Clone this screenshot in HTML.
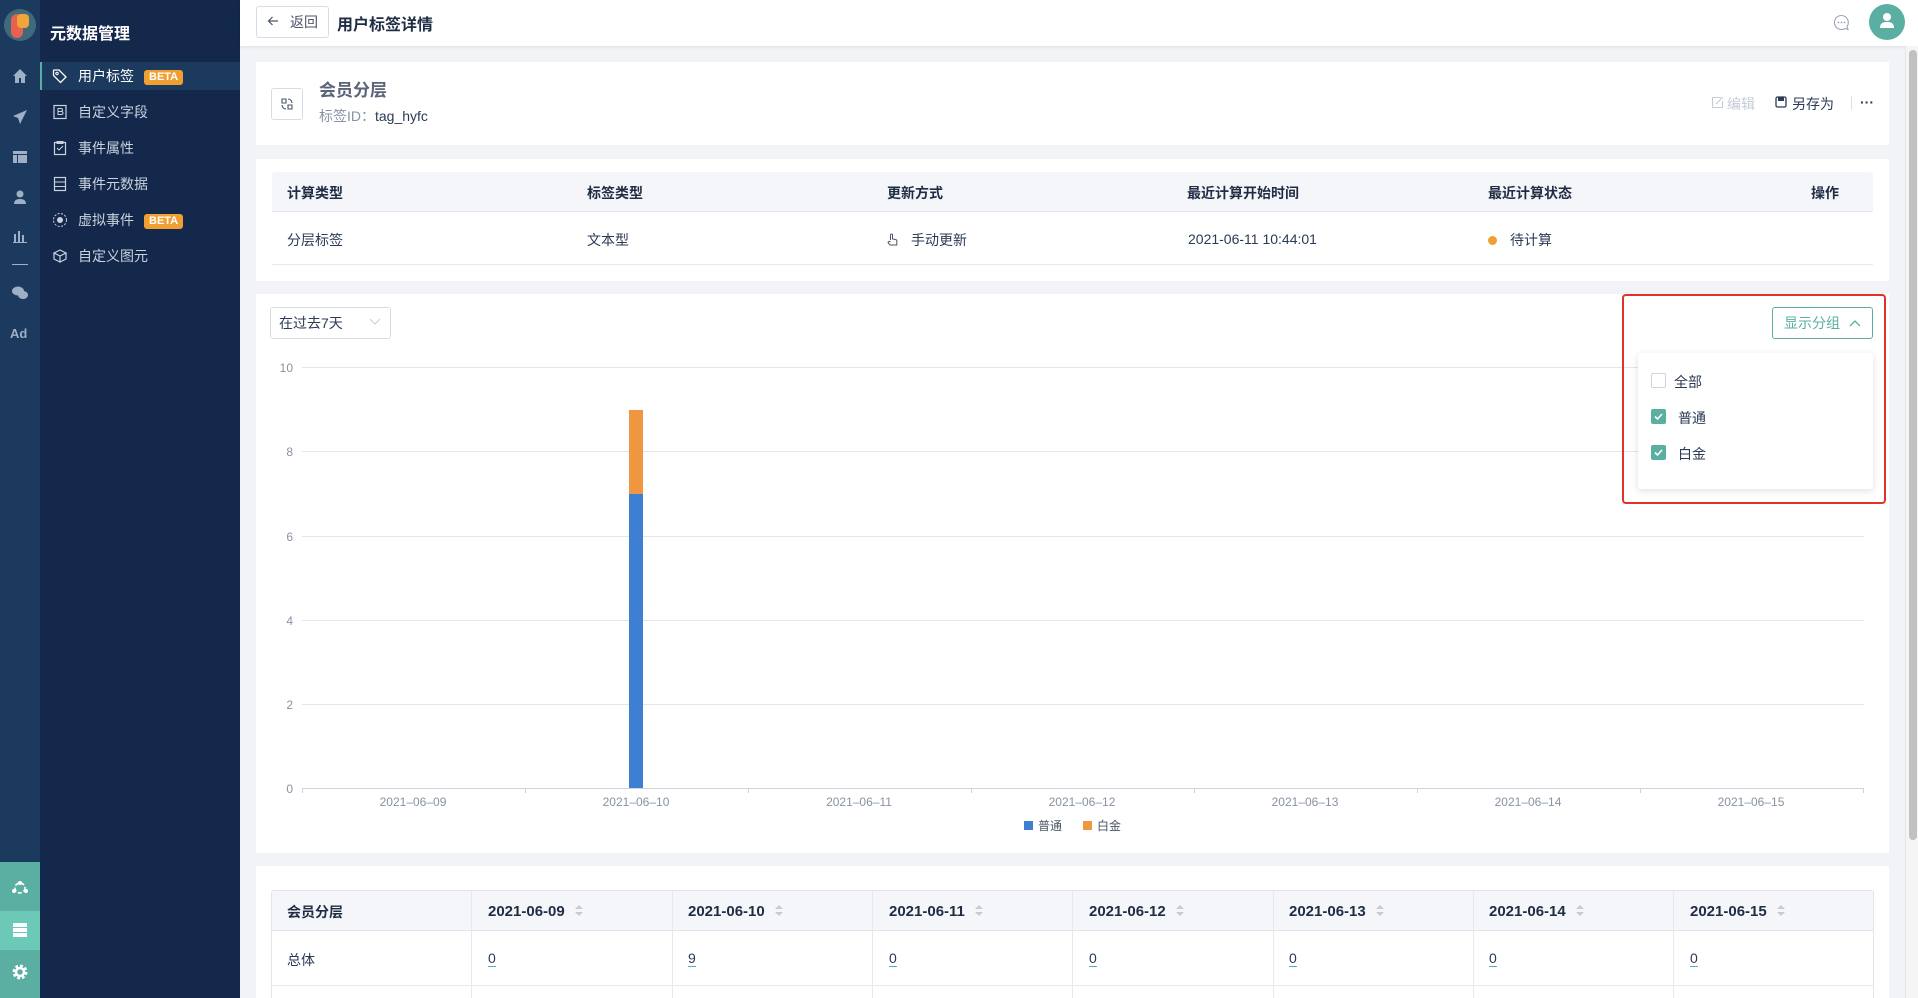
<!DOCTYPE html>
<html><head><meta charset="utf-8"><style>
*{box-sizing:border-box;margin:0;padding:0}
body{width:1918px;height:998px;overflow:hidden;background:#f2f3f7;font-family:"Liberation Sans","Noto Sans CJK SC",sans-serif;color:#2b3a55;font-size:14px;position:relative}
.a{position:absolute}
.rail{left:0;top:0;width:40px;height:998px;background:#1c3a5e}
.side{left:40px;top:0;width:200px;height:998px;background:#13284a}
.mi{position:absolute;left:0;width:200px;height:36px;color:#c9d2de;font-size:14px;line-height:36px;padding-left:38px}
.mi svg{position:absolute;left:12px;top:10px}
.beta{display:inline-block;background:#f0a032;color:#fff;font-size:11px;line-height:15px;padding:0 5px;border-radius:3px;margin-left:10px;font-weight:bold;vertical-align:1px}
.card{background:#fff}
.th{background:#f4f6f9;font-weight:bold;color:#1f2d44}
.srt{display:inline-block;width:8px;height:12px;margin-left:10px;vertical-align:-1px;position:relative}
.srt:before{content:"";position:absolute;left:0;top:0;border:4px solid transparent;border-bottom:4px solid #c5ccd6;border-top:0}
.srt:after{content:"";position:absolute;left:0;top:7px;border:4px solid transparent;border-top:4px solid #c5ccd6;border-bottom:0}
</style></head><body>
<div class="a rail"></div>
<div class="a" style="left:4px;top:9px;width:32px;height:32px;border-radius:50%;background:#3f6a7c"></div>
<div class="a" style="left:11px;top:14px;width:12px;height:24px;border-radius:6px;background:#e8604e"></div>
<div class="a" style="left:17px;top:14px;width:12px;height:14px;border-radius:4px;background:#f2a33a"></div>
<svg class="a" style="left:12px;top:68px" width="16" height="16" viewBox="0 0 16 16"><path d="M8 1L1 8h2v7h4v-5h2v5h4V8h2z" fill="#9fb0c6"/></svg>
<svg class="a" style="left:12px;top:109px" width="16" height="16" viewBox="0 0 16 16"><path d="M15 1L1 7l5 2 2 6z" fill="#9fb0c6"/></svg>
<svg class="a" style="left:12px;top:149px" width="16" height="16" viewBox="0 0 16 16"><path d="M1 2h14v3H1zM1 6h4v8H1zM6 6h9v8H6z" fill="#9fb0c6"/></svg>
<svg class="a" style="left:12px;top:189px" width="16" height="16" viewBox="0 0 16 16"><circle cx="8" cy="5" r="3.5" fill="#9fb0c6"/><path d="M2 15c0-4 3-5 6-5s6 1 6 5z" fill="#9fb0c6"/></svg>
<svg class="a" style="left:12px;top:228px" width="16" height="16" viewBox="0 0 16 16"><path d="M2 6h2v8H2zM6 3h2v11H6zM10 7h2v7h-2zM1 14h14v1H1z" fill="#9fb0c6"/></svg>
<div class="a" style="left:12px;top:264px;width:16px;height:1px;background:#9fb0c6"></div>
<svg class="a" style="left:11px;top:286px" width="18" height="14" viewBox="0 0 18 14"><ellipse cx="7" cy="5" rx="6" ry="4.5" fill="#9fb0c6"/><ellipse cx="12" cy="9" rx="5" ry="4" fill="#9fb0c6"/></svg>
<div class="a" style="left:10px;top:326px;color:#9fb0c6;font-weight:bold;font-size:13px">Ad</div>
<div class="a" style="left:0;top:862px;width:40px;height:49px;background:#5aafa2"></div>
<div class="a" style="left:0;top:911px;width:40px;height:39px;background:#6cc8b7"></div>
<div class="a" style="left:0;top:950px;width:40px;height:48px;background:#5aafa2"></div>
<svg class="a" style="left:11px;top:880px" width="18" height="16" viewBox="0 0 18 16"><circle cx="9" cy="8" r="5" fill="none" stroke="#fff" stroke-width="1.6" stroke-dasharray="4 2"/><circle cx="9" cy="3" r="2" fill="#fff"/><circle cx="3" cy="11" r="2" fill="#fff"/><circle cx="15" cy="11" r="2" fill="#fff"/></svg>
<svg class="a" style="left:12px;top:922px" width="16" height="16" viewBox="0 0 16 16"><path d="M1 1h14v4H1zM1 6h14v4H1zM1 11h14v4H1z" fill="#fff"/></svg>
<svg class="a" style="left:11px;top:963px" width="18" height="18" viewBox="0 0 18 18"><circle cx="9" cy="9" r="5.5" fill="none" stroke="#fff" stroke-width="4" stroke-dasharray="2.5 1.8"/><circle cx="9" cy="9" r="4" fill="none" stroke="#fff" stroke-width="2.5"/></svg>

<div class="a side"></div>
<div class="a" style="left:50px;top:20px;color:#fff;font-weight:bold;font-size:16px">元数据管理</div>
<div class="a" style="left:40px;top:62px;width:200px;height:28px;background:#1c3a5e;border-left:2px solid #5aafa2"></div>
<div class="a" style="left:40px;top:0">
 <div class="mi" style="top:58px;color:#fff">
  <svg width="16" height="16" viewBox="0 0 16 16"><path d="M1.5 2.5v5l7 7 5.5-5.5-7-7h-5z" fill="none" stroke="#fff" stroke-width="1.3"/><circle cx="5" cy="5.5" r="1.2" fill="none" stroke="#fff"/></svg>用户标签<span class="beta">BETA</span></div>
 <div class="mi" style="top:94px"><svg width="16" height="16" viewBox="0 0 16 16"><rect x="2" y="1.5" width="12" height="13" fill="none" stroke="#c9d2de" stroke-width="1.2"/><path d="M6 4.5h3a1.5 1.5 0 0 1 0 3H6zM6 7.5h3.5a1.5 1.5 0 0 1 0 3H6z" fill="none" stroke="#c9d2de"/></svg>自定义字段</div>
 <div class="mi" style="top:130px"><svg width="16" height="16" viewBox="0 0 16 16"><rect x="2.5" y="2.5" width="11" height="12" fill="none" stroke="#c9d2de" stroke-width="1.2"/><path d="M5 1.5h6v2H5zM5 8l2 2 4-4" fill="none" stroke="#c9d2de"/></svg>事件属性</div>
 <div class="mi" style="top:166px"><svg width="16" height="16" viewBox="0 0 16 16"><rect x="2.5" y="1.5" width="11" height="13" fill="none" stroke="#c9d2de" stroke-width="1.2"/><path d="M2.5 6h11M2.5 10.5h11" stroke="#c9d2de"/></svg>事件元数据</div>
 <div class="mi" style="top:202px"><svg width="16" height="16" viewBox="0 0 16 16"><circle cx="8" cy="8" r="6.5" fill="none" stroke="#c9d2de" stroke-dasharray="2 1.5"/><circle cx="8" cy="8" r="3" fill="#c9d2de"/></svg>虚拟事件<span class="beta">BETA</span></div>
 <div class="mi" style="top:238px"><svg width="16" height="16" viewBox="0 0 16 16"><path d="M2 5l6-3 6 3-6 3zM2 5v6l6 3M8 8v6l6-3V5" fill="none" stroke="#c9d2de" stroke-width="1.2"/></svg>自定义图元</div>
</div>

<div class="a" style="left:240px;top:0;width:1678px;height:46px;background:#fff;box-shadow:0 1px 3px rgba(0,0,0,.08)"></div>
<div class="a" style="left:256px;top:6px;width:73px;height:32px;border:1px solid #d8dde5;border-radius:3px;font-size:14px;line-height:30px;padding-left:33px;color:#4a5568">返回</div>
<svg class="a" style="left:267px;top:15px" width="12" height="12" viewBox="0 0 12 12"><path d="M11 6H1.5M5.5 2L1.5 6l4 4" fill="none" stroke="#4a5568" stroke-width="1.2"/></svg>
<div class="a" style="left:337px;top:11px;font-weight:bold;font-size:16px;color:#1f2d44">用户标签详情</div>
<svg class="a" style="left:1833px;top:14px" width="17" height="17" viewBox="0 0 17 17"><path d="M8.5 1.5a7 7 0 1 0 3.5 13l3 1-1-3a7 7 0 0 0-5.5-11z" fill="none" stroke="#9aa5b4" stroke-width="1.1"/><circle cx="5.5" cy="8.5" r=".9" fill="#9aa5b4"/><circle cx="8.5" cy="8.5" r=".9" fill="#9aa5b4"/><circle cx="11.5" cy="8.5" r=".9" fill="#9aa5b4"/></svg>
<div class="a" style="left:1869px;top:4px;width:36px;height:36px;border-radius:50%;background:#5aafa2"></div>
<svg class="a" style="left:1879px;top:12px" width="16" height="18" viewBox="0 0 16 18"><circle cx="8" cy="5" r="4" fill="#fff"/><path d="M1 16c0-5 3-6 7-6s7 1 7 6z" fill="#fff"/></svg>
<div class="a" style="left:1905px;top:46px;width:13px;height:952px;background:#f5f5f5;border-left:1px solid #e5e5e5"></div>
<div class="a" style="left:1909px;top:50px;width:8px;height:790px;background:#c1c1c1;border-radius:4px"></div>

<div class="a card" style="left:256px;top:62px;width:1633px;height:83px"></div>
<div class="a" style="left:271px;top:88px;width:32px;height:32px;border:1px solid #d8dde5;border-radius:3px"></div>
<svg class="a" style="left:279px;top:96px" width="16" height="16" viewBox="0 0 16 16"><path d="M3 3h4v4H3zM9 9h4v4H9z" fill="none" stroke="#4a5568" stroke-width="1.1"/><path d="M3 9a4 4 0 0 0 4 4M9 3a4 4 0 0 1 4 4" fill="none" stroke="#4a5568" stroke-width="1.1"/></svg>
<div class="a" style="left:319px;top:76px;font-size:17px;font-weight:bold;color:#5a6577">会员分层</div>
<div class="a" style="left:319px;top:106px;font-size:14px;color:#8893a3">标签ID：<span style="color:#2b3a55">tag_hyfc</span></div>
<svg class="a" style="left:1711px;top:96px" width="13" height="13" viewBox="0 0 13 13"><path d="M10 1.5H1.5v10h10V5M5 8l7-7" fill="none" stroke="#c5ccd6" stroke-width="1.1"/></svg>
<div class="a" style="left:1727px;top:94px;color:#c5ccd6">编辑</div>
<svg class="a" style="left:1775px;top:96px" width="12" height="12" viewBox="0 0 12 12"><rect x="1" y="1" width="10" height="10" rx="1.5" fill="none" stroke="#2b3a55" stroke-width="1.3"/><rect x="3" y="1" width="6" height="4" fill="#2b3a55"/></svg>
<div class="a" style="left:1792px;top:94px;color:#2b3a55">另存为</div>
<div class="a" style="left:1851px;top:96px;width:1px;height:14px;background:#dde1e7"></div>
<div class="a" style="left:1860px;top:94px;color:#2b3a55;font-weight:bold">···</div>

<div class="a card" style="left:256px;top:159px;width:1633px;height:122px"></div>
<div class="a th" style="left:272px;top:172px;width:1601px;height:40px;border-bottom:1px solid #e2e6ec;border-radius:3px 3px 0 0"></div>
<div class="a" style="left:272px;top:264px;width:1601px;height:1px;background:#e6e9ee"></div>
<div class="a" style="top:183px;left:287px;font-weight:bold;color:#1f2d44">计算类型</div>
<div class="a" style="top:183px;left:587px;font-weight:bold;color:#1f2d44">标签类型</div>
<div class="a" style="top:183px;left:887px;font-weight:bold;color:#1f2d44">更新方式</div>
<div class="a" style="top:183px;left:1187px;font-weight:bold;color:#1f2d44">最近计算开始时间</div>
<div class="a" style="top:183px;left:1488px;font-weight:bold;color:#1f2d44">最近计算状态</div>
<div class="a" style="top:183px;left:1811px;font-weight:bold;color:#1f2d44">操作</div>
<div class="a" style="top:230px;left:287px">分层标签</div>
<div class="a" style="top:230px;left:587px">文本型</div>
<svg class="a" style="left:887px;top:233px" width="11" height="13" viewBox="0 0 11 13"><path d="M3.5 7V2a1 1 0 0 1 2 0v4l3 .5a1.5 1.5 0 0 1 1.3 1.5V12H3L1 9.5 2.2 8.3 3.5 9" fill="none" stroke="#4a5568" stroke-width="1"/></svg>
<div class="a" style="top:230px;left:911px">手动更新</div>
<div class="a" style="top:231px;left:1188px">2021-06-11 10:44:01</div>
<div class="a" style="top:236px;left:1488px;width:9px;height:9px;border-radius:50%;background:#f0a032"></div>
<div class="a" style="top:230px;left:1510px">待计算</div>

<div class="a card" style="left:256px;top:294px;width:1633px;height:559px"></div>
<div class="a" style="left:270px;top:307px;width:121px;height:32px;border:1px solid #d8dde5;border-radius:3px;line-height:30px;padding-left:8px;color:#2b3a55">在过去7天</div>
<svg class="a" style="left:369px;top:318px" width="12" height="8" viewBox="0 0 12 8"><path d="M1 1l5 5 5-5" fill="none" stroke="#c5ccd6"/></svg>
<svg class="a" style="left:260px;top:350px" width="1640" height="490" viewBox="260 350 1640 490">
<g stroke="#e3e6ea" stroke-width="1">
<line x1="302" y1="367.5" x2="1864" y2="367.5"/><line x1="302" y1="451.5" x2="1864" y2="451.5"/><line x1="302" y1="536.5" x2="1864" y2="536.5"/><line x1="302" y1="620.5" x2="1864" y2="620.5"/><line x1="302" y1="704.5" x2="1864" y2="704.5"/>
</g>
<line x1="302" y1="788.5" x2="1864" y2="788.5" stroke="#d0d4da"/>
<g stroke="#d0d4da"><line x1="302.5" y1="788" x2="302.5" y2="793"/><line x1="525.5" y1="788" x2="525.5" y2="793"/><line x1="748.5" y1="788" x2="748.5" y2="793"/><line x1="971.5" y1="788" x2="971.5" y2="793"/><line x1="1194.5" y1="788" x2="1194.5" y2="793"/><line x1="1417.5" y1="788" x2="1417.5" y2="793"/><line x1="1640.5" y1="788" x2="1640.5" y2="793"/><line x1="1863.5" y1="788" x2="1863.5" y2="793"/></g>
<g font-family="Liberation Sans,sans-serif" font-size="12" fill="#8893a3" text-anchor="end">
<text x="293" y="372">10</text><text x="293" y="456">8</text><text x="293" y="541">6</text><text x="293" y="625">4</text><text x="293" y="709">2</text><text x="293" y="793">0</text>
</g>
<g font-family="Liberation Sans,sans-serif" font-size="12" fill="#8893a3" text-anchor="middle">
<text x="413" y="806">2021–06–09</text><text x="636" y="806">2021–06–10</text><text x="859" y="806">2021–06–11</text><text x="1082" y="806">2021–06–12</text><text x="1305" y="806">2021–06–13</text><text x="1528" y="806">2021–06–14</text><text x="1751" y="806">2021–06–15</text>
</g>
<rect x="629" y="410" width="14" height="84" fill="#ee9640"/>
<rect x="629" y="494" width="14" height="294" fill="#3f7fd3"/>
<rect x="1024" y="821" width="9" height="9" fill="#3f7fd3"/>
<text x="1038" y="830" font-size="12" fill="#4a5568" font-family="Liberation Sans,Noto Sans CJK SC,sans-serif">普通</text>
<rect x="1083" y="821" width="9" height="9" fill="#ee9640"/>
<text x="1097" y="830" font-size="12" fill="#4a5568" font-family="Liberation Sans,Noto Sans CJK SC,sans-serif">白金</text>
</svg>

<div class="a" style="left:1772px;top:307px;width:101px;height:32px;border:1px solid #5aafa2;border-radius:3px;color:#5aafa2;line-height:30px;padding-left:11px">显示分组</div>
<svg class="a" style="left:1849px;top:319px" width="12" height="8" viewBox="0 0 12 8"><path d="M1 7l5-5 5 5" fill="none" stroke="#5aafa2" stroke-width="1.3"/></svg>
<div class="a" style="left:1638px;top:353px;width:235px;height:136px;background:#fff;border-radius:3px;box-shadow:0 2px 8px rgba(0,0,0,.12)"></div>
<div class="a" style="left:1651px;top:373px;width:15px;height:15px;border:1px solid #d0d5dc;border-radius:2px;background:#fff"></div>
<div class="a" style="left:1674px;top:372px">全部</div>
<div class="a" style="left:1651px;top:409px;width:15px;height:15px;border-radius:2px;background:#5aafa2"></div>
<svg class="a" style="left:1653px;top:411px" width="11" height="11" viewBox="0 0 11 11"><path d="M2 5.5l2.5 2.5 4.5-5" fill="none" stroke="#fff" stroke-width="1.6"/></svg>
<div class="a" style="left:1678px;top:408px">普通</div>
<div class="a" style="left:1651px;top:445px;width:15px;height:15px;border-radius:2px;background:#5aafa2"></div>
<svg class="a" style="left:1653px;top:447px" width="11" height="11" viewBox="0 0 11 11"><path d="M2 5.5l2.5 2.5 4.5-5" fill="none" stroke="#fff" stroke-width="1.6"/></svg>
<div class="a" style="left:1678px;top:444px">白金</div>
<div class="a" style="left:1622px;top:294px;width:264px;height:210px;border:2px solid #e0322a;border-radius:4px"></div>

<div class="a card" style="left:256px;top:866px;width:1633px;height:132px"></div>
<div class="a" style="left:271px;top:890px;width:1603px;height:108px;border:1px solid #e2e6ec;border-bottom:none;border-radius:3px 3px 0 0"></div>
<div class="a th" style="left:272px;top:891px;width:1601px;height:40px;border-bottom:1px solid #e2e6ec"></div>
<div class="a" style="left:272px;top:985px;width:1601px;height:1px;background:#e6e9ee"></div>
<div class="a" style="left:471px;top:891px;width:1px;height:107px;background:#e6e9ee"></div>
<div class="a" style="left:672px;top:891px;width:1px;height:107px;background:#e6e9ee"></div>
<div class="a" style="left:872px;top:891px;width:1px;height:107px;background:#e6e9ee"></div>
<div class="a" style="left:1072px;top:891px;width:1px;height:107px;background:#e6e9ee"></div>
<div class="a" style="left:1273px;top:891px;width:1px;height:107px;background:#e6e9ee"></div>
<div class="a" style="left:1473px;top:891px;width:1px;height:107px;background:#e6e9ee"></div>
<div class="a" style="left:1673px;top:891px;width:1px;height:107px;background:#e6e9ee"></div>
<div class="a" style="left:287px;top:902px;font-weight:bold;color:#1f2d44">会员分层</div>
<div class="a" style="left:287px;top:950px">总体</div>
<div style="position:absolute;top:903px;left:488px;font-weight:bold;color:#1f2d44;font-size:15px">2021-06-09<span class="srt"></span></div>
<div style="position:absolute;top:903px;left:688px;font-weight:bold;color:#1f2d44;font-size:15px">2021-06-10<span class="srt"></span></div>
<div style="position:absolute;top:903px;left:889px;font-weight:bold;color:#1f2d44;font-size:15px">2021-06-11<span class="srt"></span></div>
<div style="position:absolute;top:903px;left:1089px;font-weight:bold;color:#1f2d44;font-size:15px">2021-06-12<span class="srt"></span></div>
<div style="position:absolute;top:903px;left:1289px;font-weight:bold;color:#1f2d44;font-size:15px">2021-06-13<span class="srt"></span></div>
<div style="position:absolute;top:903px;left:1489px;font-weight:bold;color:#1f2d44;font-size:15px">2021-06-14<span class="srt"></span></div>
<div style="position:absolute;top:903px;left:1690px;font-weight:bold;color:#1f2d44;font-size:15px">2021-06-15<span class="srt"></span></div>
<div class="a" style="left:488px;top:950px;border-bottom:1px solid #5aafa2;line-height:16px">0</div>
<div class="a" style="left:688px;top:950px;border-bottom:1px solid #5aafa2;line-height:16px">9</div>
<div class="a" style="left:889px;top:950px;border-bottom:1px solid #5aafa2;line-height:16px">0</div>
<div class="a" style="left:1089px;top:950px;border-bottom:1px solid #5aafa2;line-height:16px">0</div>
<div class="a" style="left:1289px;top:950px;border-bottom:1px solid #5aafa2;line-height:16px">0</div>
<div class="a" style="left:1489px;top:950px;border-bottom:1px solid #5aafa2;line-height:16px">0</div>
<div class="a" style="left:1690px;top:950px;border-bottom:1px solid #5aafa2;line-height:16px">0</div>
</body></html>
